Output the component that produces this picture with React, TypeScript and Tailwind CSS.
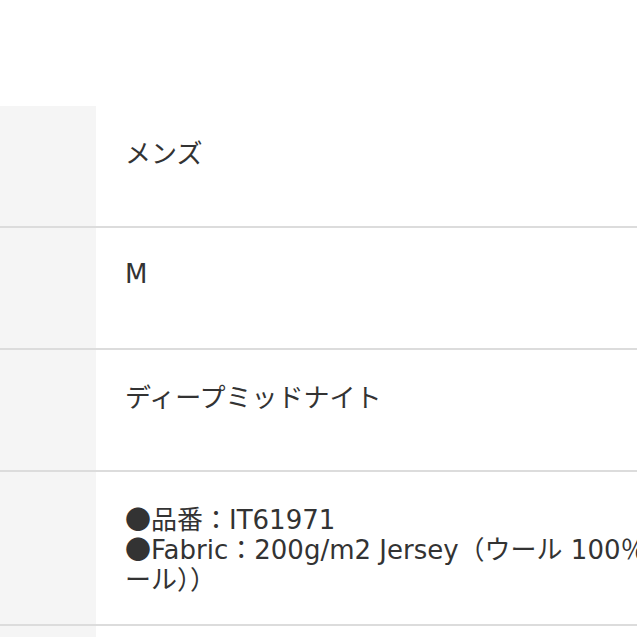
import React from "react";

function J({ children }: { children: React.ReactNode }) {
  return <span className="font-['Noto_Sans_CJK_JP',sans-serif]">{children}</span>;
}

function Line({ children }: { children: React.ReactNode }) {
  return <div className="h-[30px] whitespace-nowrap leading-[30px]">{children}</div>;
}

function Row({ children, tall }: { children: React.ReactNode; tall?: boolean }) {
  return (
    <div className="flex border-b-2 border-[#dcdcdc]">
      <div className="w-[96px] shrink-0 bg-[#f5f5f5]" />
      <div
        className={`flex-1 pl-[29px] pt-[31px] text-[26px] text-[#333333] ${
          tall ? "pb-[31px]" : "h-[120px]"
        }`}
      >
        {children}
      </div>
    </div>
  );
}

export default function App() {
  return (
    <div className="h-[637px] w-[637px] overflow-hidden bg-white font-['DejaVu_Sans','Noto_Sans_CJK_JP',sans-serif]">
      <div className="h-[106px]" />
      <Row>
        <Line>
          <J>メンズ</J>
        </Line>
      </Row>
      <Row>
        <Line>M</Line>
      </Row>
      <Row>
        <Line>
          <J>ディープミッドナイト</J>
        </Line>
      </Row>
      <Row tall>
        <Line>
          <J>●品番：</J>IT61971
        </Line>
        <Line>
          <J>●</J>Fabric<J>：</J>200g/m2 Jersey<J>（ウール</J> 100<J>％（メリノウ</J>
        </Line>
        <Line>
          <J>ール））</J>
        </Line>
      </Row>
      <div className="flex h-[20px]">
        <div className="w-[96px] shrink-0 bg-[#f5f5f5]" />
        <div className="flex-1" />
      </div>
    </div>
  );
}
